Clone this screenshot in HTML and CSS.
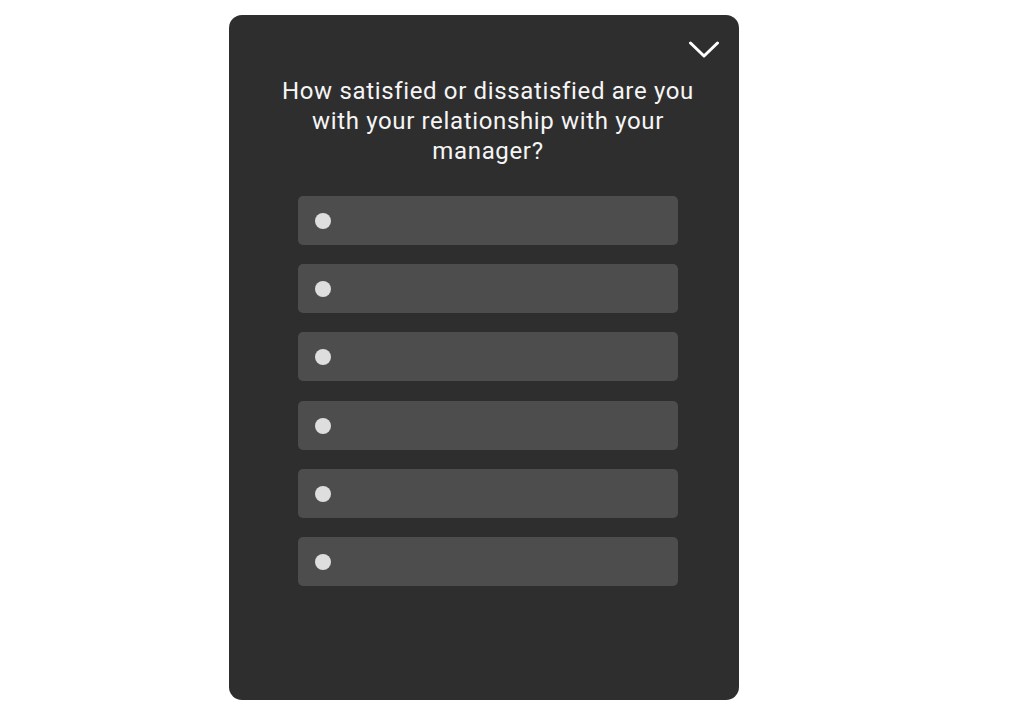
FILE: index.html
```html
<!DOCTYPE html>
<html lang="en">
<head>
  <meta charset="UTF-8">
  <meta name="viewport" content="width=device-width, initial-scale=1.0">
  <title>Survey</title>
  <link rel="stylesheet" href="styles.css">
</head>
<body>
  <div class="card">
    <div class="card-header">
      <button class="collapse" type="button" aria-label="Collapse">
        <svg width="32" height="18" viewBox="0 0 32 18">
          <polyline points="2.5,3 16,16 29.5,3" fill="none" stroke="#fff" stroke-width="3" stroke-linecap="round" stroke-linejoin="round"/>
        </svg>
      </button>
    </div>
    <div class="card-body">
      <h2 class="question">How satisfied or dissatisfied are you with your relationship with your manager?</h2>
      <ul class="options">
        <li class="option"><span class="dot"></span></li>
        <li class="option"><span class="dot"></span></li>
        <li class="option"><span class="dot"></span></li>
        <li class="option"><span class="dot"></span></li>
        <li class="option"><span class="dot"></span></li>
        <li class="option"><span class="dot"></span></li>
      </ul>
    </div>
  </div>
</body>
</html>
```

FILE: styles.css
```css
/* styles.css */

body {
  font-family: Roboto, "Liberation Sans", Arial, sans-serif;
  margin: 0;
  padding: 0;
  background-color: #fff;
}

.card {
  margin: 15px 0 0 229px;
  width: 510px;
  height: 685px;
  background-color: #2e2e2e;
  border-radius: 13px;
}

.card-header {
  display: flex;
  justify-content: flex-end;
  padding: 25px 19px 0 0;
}

.collapse {
  display: block;
  padding: 0;
  border: none;
  background: none;
  cursor: pointer;
  height: 18px;
}

.collapse svg {
  display: block;
}

.card-body {
  padding: 0 61px 0 69px;
}

.question {
  margin: 18px -30px 0;
  color: #f5f5f5;
  font-size: 24px;
  font-weight: 400;
  letter-spacing: 0.65px;
  line-height: 30px;
  text-align: center;
}

.options {
  list-style: none;
  margin: 30px 0 0;
  padding: 0;
  display: flex;
  flex-direction: column;
  gap: 19.2px;
}

.option {
  height: 49px;
  background-color: #4d4d4d;
  border-radius: 5px;
  display: flex;
  align-items: center;
  padding-left: 17px;
}

.dot {
  width: 16px;
  height: 16px;
  margin-top: 1px;
  border-radius: 50%;
  background-color: #dedede;
}
```
